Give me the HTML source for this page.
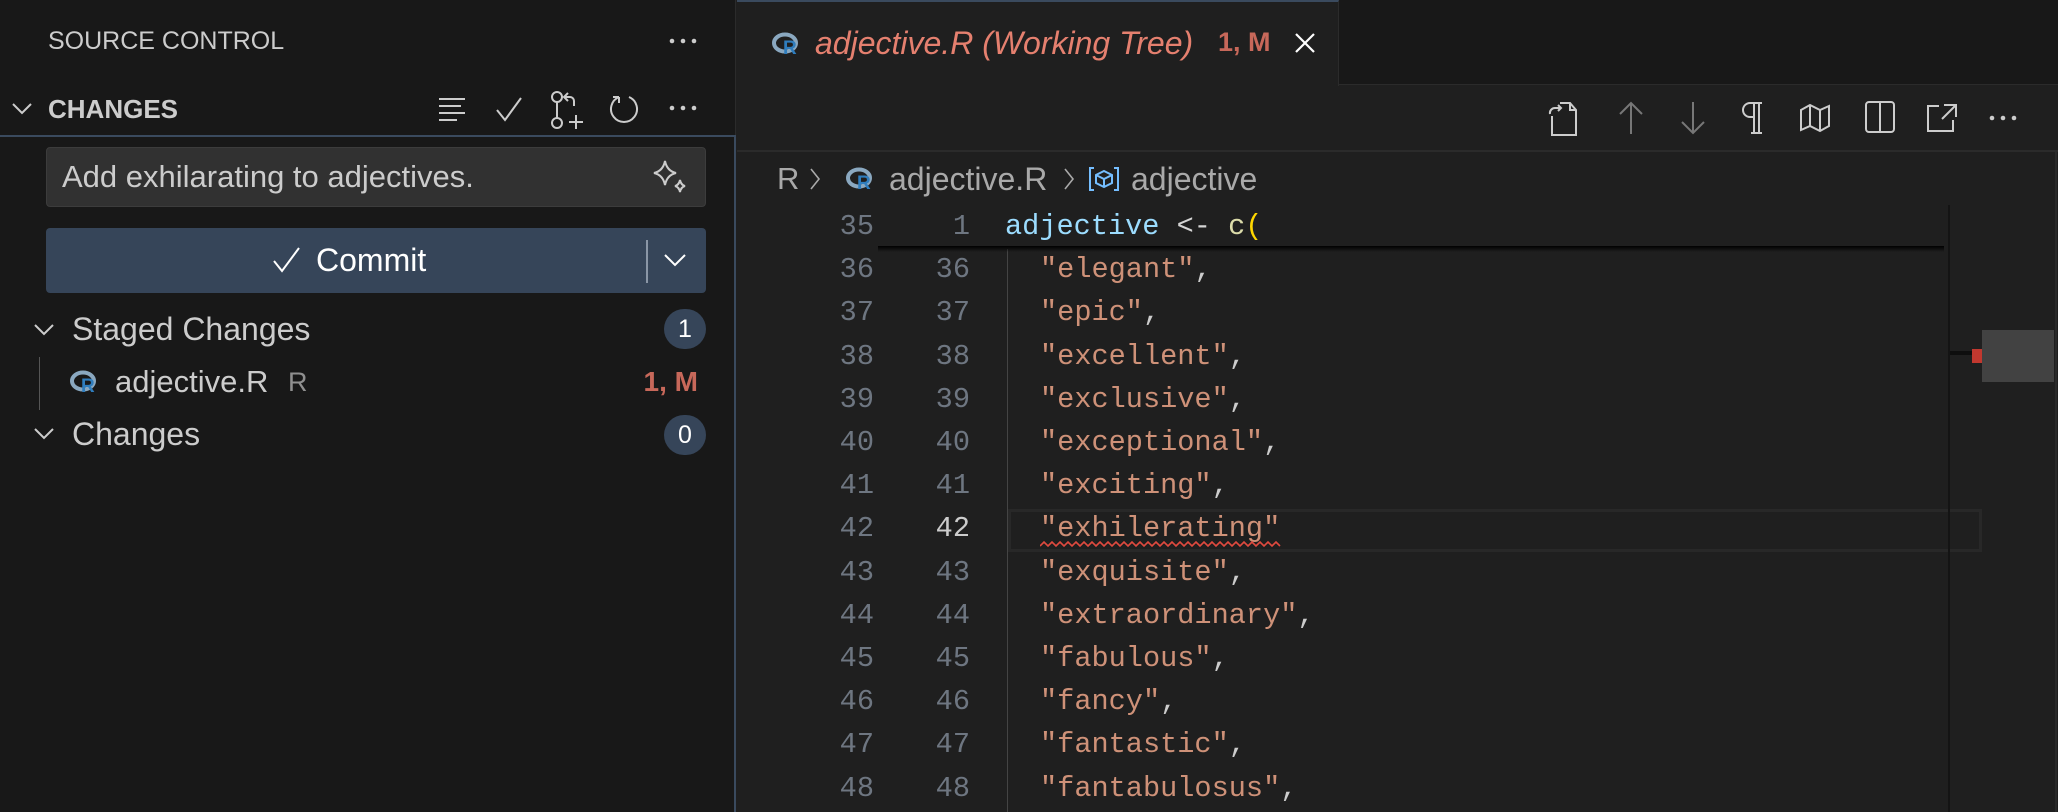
<!DOCTYPE html>
<html><head><meta charset="utf-8"><style>
*{margin:0;padding:0;box-sizing:border-box}
body{width:2058px;height:812px;background:#1f1f1f;overflow:hidden;position:relative;font-family:"Liberation Sans",sans-serif;color:#cccccc}
.abs{position:absolute}
#side{left:0;top:0;width:736px;height:812px;background:#181818;border-right:1px solid #2b2b2b}
.t{position:absolute;white-space:nowrap;line-height:1}
.badge{position:absolute;width:42px;height:40px;border-radius:21px;background:#364559;color:#fff;font-size:25px;text-align:center;line-height:40px}
.code{position:absolute;font-family:"Liberation Mono",monospace;font-size:28.6px;white-space:pre;line-height:43.2px;height:43.2px}
.ln{color:#6e7681;text-align:right;width:60px}
.s{color:#ce9178}.p{color:#cccccc}
svg{position:absolute}
</style></head><body>
<div id="side" class="abs"></div>
<div class="t" style="left:48px;top:29px;font-size:25px;color:#cccccc">SOURCE CONTROL</div>
<svg style="left:668px;top:36px" width="30" height="10" viewBox="0 0 30 10" fill="#ccc"><circle cx="4" cy="5" r="2.3"/><circle cx="15" cy="5" r="2.3"/><circle cx="26" cy="5" r="2.3"/></svg>
<!-- changes header -->
<svg style="left:10px;top:98px" width="24" height="20" viewBox="0 0 24 20"><path d="M3 6 L12 15 L21 6" fill="none" stroke="#ccc" stroke-width="2"/></svg>
<div class="t" style="left:48px;top:96px;font-size:26px;font-weight:bold;color:#cccccc">CHANGES</div>
<svg style="left:437px;top:95px" width="30" height="30" viewBox="0 0 30 30" stroke="#ccc" stroke-width="2"><path d="M2 4H28M2 11H24M2 18H28M2 25H20"/></svg>
<svg style="left:494px;top:95px" width="30" height="30" viewBox="0 0 30 30"><path d="M3 15 L11 25 L27 3" fill="none" stroke="#ccc" stroke-width="2"/></svg>
<svg style="left:550px;top:90px" width="36" height="40" viewBox="0 0 36 40" fill="none" stroke="#ccc" stroke-width="2"><circle cx="7" cy="7" r="5"/><circle cx="7" cy="33" r="5"/><path d="M7 12V28M18 3l-4 4 4 4M14 7h6a4 4 0 0 1 4 4v5M26 25v14M19 32h14"/></svg>
<svg style="left:609px;top:93px" width="32" height="32" viewBox="0 0 32 32" fill="none" stroke="#ccc" stroke-width="2"><path d="M10 4 A13 13 0 1 0 20 4"/><path d="M10 4 L4 4 M10 4 L10 10"/></svg>
<svg style="left:668px;top:103px" width="30" height="10" viewBox="0 0 30 10" fill="#ccc"><circle cx="4" cy="5" r="2.3"/><circle cx="15" cy="5" r="2.3"/><circle cx="26" cy="5" r="2.3"/></svg>
<div class="abs" style="left:0;top:135px;width:736px;height:677px;border-top:2px solid #3a4a5e;border-right:2px solid #3a4a5e"></div>
<!-- input -->
<div class="abs" style="left:46px;top:147px;width:660px;height:60px;background:#313131;border:1px solid #3c3c3c;border-radius:4px"></div>
<div class="t" style="left:62px;top:161px;font-size:31px;color:#cccccc">Add exhilarating to adjectives.</div>
<svg style="left:650px;top:158px" width="40" height="40" viewBox="0 0 40 40" fill="none" stroke="#ccc" stroke-width="2"><path d="M15 3 Q17 13 26 15 Q17 17 15 27 Q13 17 4 15 Q13 13 15 3Z"/><path d="M30 22 Q31 27 35 28 Q31 29 30 34 Q29 29 25 28 Q29 27 30 22Z"/></svg>
<!-- commit -->
<div class="abs" style="left:46px;top:228px;width:660px;height:65px;background:#364559;border-radius:4px"></div>
<svg style="left:272px;top:246px" width="30" height="28" viewBox="0 0 30 28"><path d="M2 15 L10 25 L27 2" fill="none" stroke="#fff" stroke-width="2"/></svg>
<div class="t" style="left:316px;top:244px;font-size:32px;color:#fff">Commit</div>
<div class="abs" style="left:646px;top:240px;width:2px;height:43px;background:#8a96a6"></div>
<svg style="left:662px;top:250px" width="26" height="20" viewBox="0 0 26 20"><path d="M3 5 L13 15 L23 5" fill="none" stroke="#fff" stroke-width="2"/></svg>
<!-- staged -->
<svg style="left:32px;top:320px" width="24" height="20" viewBox="0 0 24 20"><path d="M3 5 L12 14 L21 5" fill="none" stroke="#ccc" stroke-width="2"/></svg>
<div class="t" style="left:72px;top:313px;font-size:32px">Staged Changes</div>
<div class="badge" style="left:664px;top:309px">1</div>
<div class="abs" style="left:39px;top:357px;width:1px;height:53px;background:#555"></div>
<svg style="left:70px;top:370px" width="30" height="24" viewBox="0 0 30 24"><ellipse cx="13" cy="11" rx="11" ry="8.5" fill="none" stroke="#8aa8c0" stroke-width="4"/><text x="11" y="22" font-family="Liberation Sans" font-weight="bold" font-size="19" fill="#2f7dbd">R</text></svg>
<div class="t" style="left:115px;top:366px;font-size:31px">adjective.R</div>
<div class="t" style="left:288px;top:369px;font-size:27px;color:#8f8f8f">R</div>
<div class="t" style="right:1360px;top:368px;font-size:28px;font-weight:bold;color:#c7685a">1, M</div>
<svg style="left:32px;top:424px" width="24" height="20" viewBox="0 0 24 20"><path d="M3 5 L12 14 L21 5" fill="none" stroke="#ccc" stroke-width="2"/></svg>
<div class="t" style="left:72px;top:418px;font-size:32px">Changes</div>
<div class="badge" style="left:664px;top:415px">0</div>

<!-- tab bar -->
<div class="abs" style="left:737px;top:0;width:1321px;height:85px;background:#181818;border-bottom:1px solid #2b2b2b"></div>
<div class="abs" style="left:737px;top:0;width:602px;height:86px;background:#1f1f1f;border-top:2px solid #3a4a5e;border-right:1px solid #2b2b2b"></div>
<svg style="left:772px;top:32px" width="30" height="24" viewBox="0 0 30 24"><ellipse cx="13" cy="11" rx="11" ry="8.5" fill="none" stroke="#8aa8c0" stroke-width="4"/><text x="11" y="22" font-family="Liberation Sans" font-weight="bold" font-size="19" fill="#2f7dbd">R</text></svg>
<div class="t" style="left:815px;top:27px;font-size:32px;font-style:italic;color:#e5806f">adjective.R (Working Tree)</div>
<div class="t" style="left:1218px;top:29px;font-size:27px;font-weight:bold;color:#c7685a">1, M</div>
<svg style="left:1294px;top:32px" width="22" height="22" viewBox="0 0 22 22"><path d="M2 2L20 20M20 2L2 20" stroke="#fff" stroke-width="2.2"/></svg>
<!-- toolbar -->
<svg style="left:1546px;top:100px" width="34" height="38" viewBox="0 0 34 38" fill="none" stroke="#ccc" stroke-width="2"><path d="M6 16V35H30V10L24 3H14"/><path d="M24 3V10H30"/><path d="M4 14 A5 5 0 0 1 9 8H15M12 5L15 8L12 11"/></svg>
<svg style="left:1616px;top:100px" width="30" height="36" viewBox="0 0 30 36" fill="none" stroke="#777" stroke-width="2"><path d="M15 34V3M4 14L15 3L26 14"/></svg>
<svg style="left:1678px;top:100px" width="30" height="36" viewBox="0 0 30 36" fill="none" stroke="#777" stroke-width="2"><path d="M15 2V33M4 22L15 33L26 22"/></svg>
<svg style="left:1740px;top:100px" width="24" height="36" viewBox="0 0 24 36" fill="none" stroke="#ccc" stroke-width="2"><path d="M10 3H22M14 3V33M19 3V33M11 33H22M10 3A7 7 0 0 0 10 17H14"/></svg>
<svg style="left:1799px;top:102px" width="32" height="32" viewBox="0 0 32 32" fill="none" stroke="#ccc" stroke-width="2"><path d="M2 8L11 3L21 8L30 4V24L21 29L11 24L2 28Z M11 3V24 M21 8V29"/></svg>
<svg style="left:1864px;top:100px" width="32" height="34" viewBox="0 0 32 34" fill="none" stroke="#ccc" stroke-width="2"><rect x="2" y="2" width="28" height="30" rx="3"/><path d="M16 2V32"/></svg>
<svg style="left:1925px;top:102px" width="34" height="32" viewBox="0 0 34 32" fill="none" stroke="#ccc" stroke-width="2"><path d="M14 4H3V29H28V18M19 3H31V15M31 3L17 17"/></svg>
<svg style="left:1988px;top:113px" width="30" height="10" viewBox="0 0 30 10" fill="#ccc"><circle cx="4" cy="5" r="2.3"/><circle cx="15" cy="5" r="2.3"/><circle cx="26" cy="5" r="2.3"/></svg>
<div class="abs" style="left:737px;top:150px;width:1321px;height:2px;background:#2b2b2b"></div>
<!-- breadcrumb -->
<div class="t" style="left:777px;top:163px;font-size:31px;color:#a9a9a9">R</div>
<svg style="left:808px;top:166px" width="14" height="26" viewBox="0 0 14 26"><path d="M3 3L11 13L3 23" fill="none" stroke="#a9a9a9" stroke-width="1.6"/></svg>
<svg style="left:846px;top:167px" width="30" height="24" viewBox="0 0 30 24"><ellipse cx="13" cy="11" rx="11" ry="8.5" fill="none" stroke="#8aa8c0" stroke-width="4"/><text x="11" y="22" font-family="Liberation Sans" font-weight="bold" font-size="19" fill="#2f7dbd">R</text></svg>
<div class="t" style="left:889px;top:163px;font-size:32px;color:#a9a9a9">adjective.R</div>
<svg style="left:1062px;top:166px" width="14" height="26" viewBox="0 0 14 26"><path d="M3 3L11 13L3 23" fill="none" stroke="#a9a9a9" stroke-width="1.6"/></svg>
<svg style="left:1088px;top:166px" width="32" height="26" viewBox="0 0 32 26" fill="none" stroke="#75beff" stroke-width="2"><path d="M6 2H2V24H6M26 2H30V24H26"/><path d="M16 5L24 9V17L16 21L8 17V9Z M8 9L16 13L24 9 M16 13V21"/></svg>
<div class="t" style="left:1131px;top:163px;font-size:32px;color:#a9a9a9">adjective</div>

<!-- code -->
<div class="abs" style="left:1007px;top:249px;width:1px;height:563px;background:#444"></div>
<div class="abs" style="left:1008px;top:509px;width:974px;height:43px;border:3px solid #282828"></div>
<div class="abs" style="left:870px;top:205px;width:1078px;height:43px;background:#1f1f1f"></div>
<div class="abs" style="left:878px;top:246px;width:1066px;height:6px;background:linear-gradient(#000,rgba(0,0,0,0))"></div>
<div class="abs" style="left:1948px;top:205px;width:2px;height:607px;background:#141414"></div>
<div class="abs" style="left:1982px;top:330px;width:72px;height:52px;background:#424242"></div>
<div class="abs" style="left:1950px;top:351px;width:32px;height:4px;background:#0e0e0e"></div>
<div class="abs" style="left:1972px;top:349px;width:10px;height:14px;background:#c1382f"></div>
<div class="abs" style="left:2055px;top:152px;width:2px;height:660px;background:#2a2a2a"></div>

<div id="lines"></div>
<script>
var words=["","\"elegant\",","\"epic\",","\"excellent\",","\"exclusive\",","\"exceptional\",","\"exciting\",","\"exhilerating\"","\"exquisite\",","\"extraordinary\",","\"fabulous\",","\"fancy\",","\"fantastic\",","\"fantabulosus\","];
var h="";
for(var i=0;i<14;i++){
 var n=35+i, y=205+i*43.2;
 h+='<div class="code ln" style="left:814px;top:'+y+'px">'+n+'</div>';
 var n2=i==0?1:n;
 h+='<div class="code ln" style="left:910px;top:'+y+'px;color:'+(n==42?'#cccccc':'#6e7681')+'">'+n2+'</div>';
 if(i==0){h+='<div class="code" style="left:1005px;top:'+y+'px"><span style="color:#9cdcfe">adjective</span><span style="color:#d4d4d4"> &lt;- </span><span style="color:#dcdcaa">c</span><span style="color:#ffd700">(</span></div>';}
 else{var w=words[i];var q=w.lastIndexOf('"');h+='<div class="code" style="left:1040px;top:'+y+'px"><span class="s">'+w.slice(0,q+1)+'</span><span class="p">'+w.slice(q+1)+'</span></div>';}
}
document.getElementById('lines').innerHTML=h;
</script>
<svg style="left:1040px;top:540px" width="242" height="8" viewBox="0 0 242 8"><path d="M0 6 L4 2 L8 6 L12 2 L16 6 L20 2 L24 6 L28 2 L32 6 L36 2 L40 6 L44 2 L48 6 L52 2 L56 6 L60 2 L64 6 L68 2 L72 6 L76 2 L80 6 L84 2 L88 6 L92 2 L96 6 L100 2 L104 6 L108 2 L112 6 L116 2 L120 6 L124 2 L128 6 L132 2 L136 6 L140 2 L144 6 L148 2 L152 6 L156 2 L160 6 L164 2 L168 6 L172 2 L176 6 L180 2 L184 6 L188 2 L192 6 L196 2 L200 6 L204 2 L208 6 L212 2 L216 6 L220 2 L224 6 L228 2 L232 6 L236 2 L240 6" fill="none" stroke="#e04a3f" stroke-width="1.6"/></svg>
</body></html>
